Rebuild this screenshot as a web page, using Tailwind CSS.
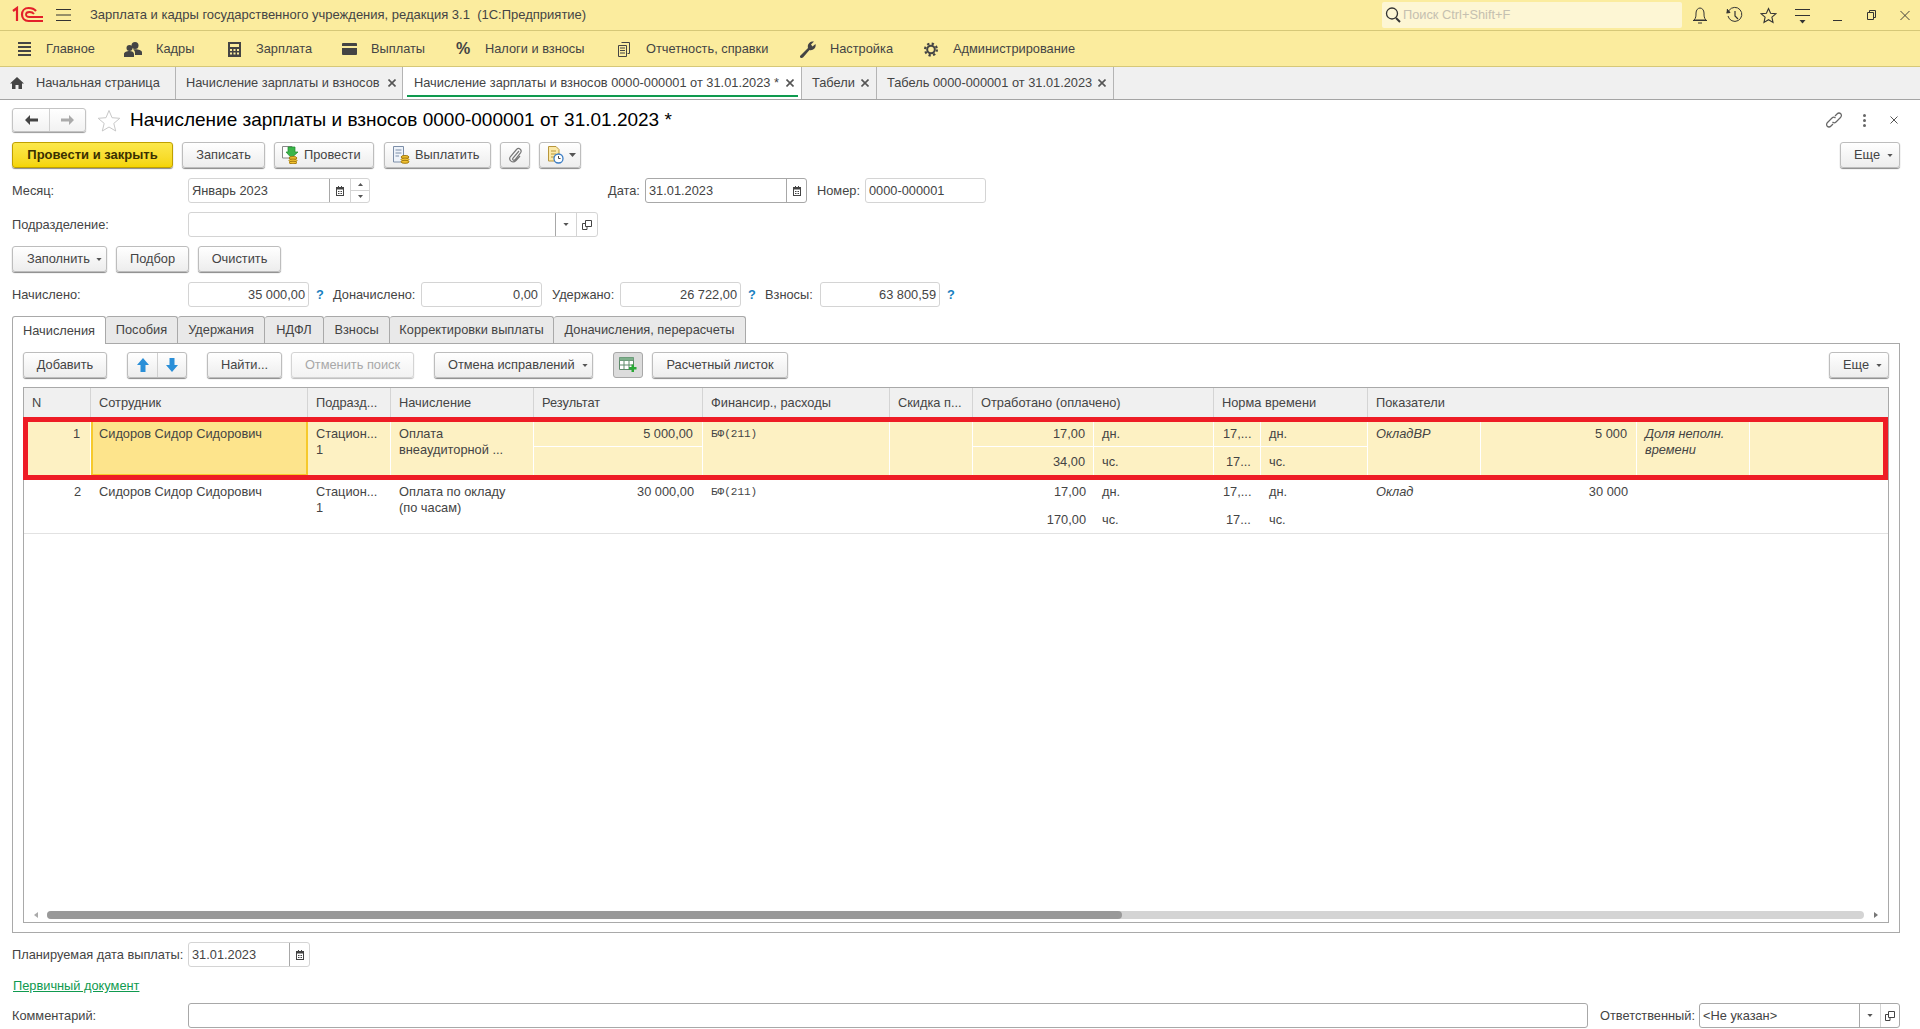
<!DOCTYPE html>
<html lang="ru">
<head>
    <meta charset="UTF-8">
    <title>Начисление зарплаты и взносов</title>
    <script src="https://cdn.jsdelivr.net/npm/@tailwindcss/browser@4"></script>
</head>
<body class="w-[1920px] h-[1029px] overflow-hidden bg-white text-[#444] text-[12.8px] leading-4 font-['Liberation_Sans',sans-serif]">

    <!-- title bar -->
    <div class="h-[31px] bg-[#fbec9e] border-b border-[#d6c878] flex items-center relative">
        <svg class="ml-[12px] w-[31px] h-[18px]" viewBox="0 0 31 18" fill="none" stroke="#e3202a" stroke-width="2.2">
            <path d="M1 5 L5 2 V15"/>
            <path d="M24 5 C22 2.5 19 2 16.5 2 C12.5 2 10 5 10 8.5 C10 12 12.5 15 16.5 15 H31"/>
            <path d="M22 8 C21 6.5 19.5 6 17.5 6 C15 6 14 7.5 14 8.5 C14 10 15 11 17.5 11 H31" stroke-width="1.8"/>
        </svg>
        <svg class="ml-[13px] w-[15px] h-[14px]" viewBox="0 0 15 14" stroke="#333" stroke-width="1"><path d="M0 1.5H15M0 7H15M0 12.5H15"/></svg>
        <div class="ml-[19px] w-[1292px] text-[13px] whitespace-pre">Зарплата и кадры государственного учреждения, редакция 3.1  (1С:Предприятие)</div>
        <div class="w-[300px] h-[26px] bg-[#fdf6d4] rounded-[2px] flex items-center pl-[3px]">
            <svg class="w-[16px] h-[18px]" viewBox="0 0 16 18" fill="none" stroke="#333" stroke-width="1.3"><circle cx="7" cy="7.5" r="5.5"/><path d="M11 12L15 16" stroke-width="2"/></svg>
            <span class="ml-[2px] text-[#c5c0b0]">Поиск Ctrl+Shift+F</span>
        </div>
        <svg class="ml-[10px] w-[16px] h-[18px]" viewBox="0 0 16 18" fill="none" stroke="#333"><path d="M2 14C4 12 4 10 4 7C4 4 6 2 8 2C10 2 12 4 12 7C12 10 12 12 14 14Z"/><path d="M1 14.5H15M6 17H10"/></svg>
        <svg class="ml-[18px] w-[17px] h-[18px]" viewBox="0 0 17 18" fill="none" stroke="#333"><path d="M3 4.5A7 7 0 1 1 2 10"/><path d="M1 3L4 6.5L0.5 7" fill="#333"/><path d="M9 5V10L12 13" stroke-width="1.2"/></svg>
        <svg class="ml-[17px] w-[17px] h-[17px]" viewBox="0 0 17 17" fill="none" stroke="#333" stroke-width="1.1"><path d="M8.5 1.5L10.6 6.3L15.8 6.8L11.9 10.2L13 15.4L8.5 12.7L4 15.4L5.1 10.2L1.2 6.8L6.4 6.3Z"/></svg>
        <svg class="ml-[18px] w-[15px] h-[17px]" viewBox="0 0 15 17" stroke="#333"><path d="M0 2.5H15M0 8.5H15" fill="none"/><path d="M4.5 13H10.5L7.500 16.500Z" fill="#333" stroke="none"/></svg>
        <svg class="ml-[23px] w-[9px] h-[14px]" viewBox="0 0 9 14" stroke="#333"><path d="M0 12.500H9"/></svg>
        <svg class="ml-[25px] w-[9px] h-[10px]" viewBox="0 0 9 10" fill="none" stroke="#333"><path d="M0.500 2.500H6.500V9.500H0.500Z M2.500 2.500V0.500H8.500V7.500H6.500"/></svg>
        <svg class="ml-[24px] w-[10px] h-[11px]" viewBox="0 0 11 11" stroke="#333"><path d="M0.500 0.500L10.500 10.500M10.500 0.500L0.500 10.500"/></svg>
    </div>

    <!-- sections -->
    <div class="h-[36px] pt-[1px] bg-[#fbec9e] border-b border-[#d6c878] flex items-center">
        <svg class="ml-[18px] w-[13px] h-[14px]" viewBox="0 0 13 14" fill="#444"><path d="M0 0H13V2H0ZM0 4H13V6H0ZM0 8H13V10H0ZM0 12H13V14H0Z"/></svg>
        <span class="ml-[15px] w-[78px]">Главное</span>
        <svg class="w-[18px] h-[15px]" viewBox="0 0 18 15" fill="#444"><circle cx="11" cy="3.500" r="3.500"/><circle cx="5.500" cy="6" r="3"/><path d="M0 15V12C0 10 3 9 5.500 9C8 9 10 10 10 12V15ZM11 15V11C11 9 10 8 9 7.500C12 7 18 7.500 18 10.500V13H11Z"/></svg>
        <span class="ml-[14px] w-[72px]">Кадры</span>
        <svg class="w-[13px] h-[15px]" viewBox="0 0 13 15" fill="#444"><path d="M0 0H13V15H0ZM2 2V5H11V2ZM2 7V9H4V7ZM5.500 7V9H7.500V7ZM9 7V9H11V7ZM2 10.500V12.500H4V10.500ZM5.500 10.500V12.500H7.500V10.500ZM9 10.500V12.500H11V10.500Z" fill-rule="evenodd"/></svg>
        <span class="ml-[15px] w-[86px]">Зарплата</span>
        <svg class="w-[15px] h-[12px]" viewBox="0 0 15 12" fill="#444"><path d="M0 1C0 .5 .5 0 1 0H14C14.500 0 15 .5 15 1V3H0ZM0 5H15V11C15 11.500 14.500 12 14 12H1C.5 12 0 11.500 0 11Z"/></svg>
        <span class="ml-[14px] w-[85px]">Выплаты</span>
        <span class="w-[14px] text-[16px] font-bold">%</span>
        <span class="ml-[15px] w-[133px]">Налоги и взносы</span>
        <svg class="w-[12px] h-[15px]" viewBox="0 0 12 15" fill="none" stroke="#444"><path d="M3.500 .5H11.500V11.500H9.500M.5 3.500H8.500V14.500H.5ZM2 6H7M2 8.500H7M2 11H7M.5 3.500"/></svg>
        <span class="ml-[16px] w-[154px]">Отчетность, справки</span>
        <svg class="w-[16px] h-[17px]" viewBox="0 0 16 17" fill="#444"><path d="M0 15L8 7C7 3 10 0 14 0.500L11 3.500L12.500 5.500L15.500 3C16.500 7 13 10 9.500 9L3 16.500C1.500 17.500 -.5 16.500 0 15Z"/></svg>
        <span class="ml-[14px] w-[94px]">Настройка</span>
        <svg class="w-[14px] h-[15px]" viewBox="0 0 14 15" fill="none" stroke="#444"><circle cx="7" cy="7.500" r="5.900" stroke-width="2.200" stroke-dasharray="2.300 2.330"/><circle cx="7" cy="7.500" r="3.800" stroke-width="2"/></svg>
        <span class="ml-[15px]">Администрирование</span>
    </div>

    <!-- open windows -->
    <div class="h-[33px] bg-[#f0f0f0] border-b border-[#a4a4a4] flex items-stretch">
        <div class="w-[176px] border-r border-[#b4b4b4] flex items-center">
            <svg class="ml-[10px] w-[14px] h-[12px]" viewBox="0 0 14 12" fill="#444"><path d="M7 0L14 6.500H12V12H8.500V8H5.500V12H2V6.500H0Z"/></svg>
            <span class="ml-[12px]">Начальная страница</span>
        </div>
        <div class="w-[227px] border-r border-[#b4b4b4] flex items-center justify-between pl-[10px] pr-[6px]">
            <span>Начисление зарплаты и взносов</span>
            <svg class="w-[8px] h-[8px]" viewBox="0 0 8 8" stroke="#555" stroke-width="1.600"><path d="M.5 .5L7.500 7.500M7.500 .5L.5 7.500"/></svg>
        </div>
        <div class="relative w-[399px] bg-white border-r border-[#b4b4b4] flex items-center justify-between pl-[11px] pr-[7px]">
            <span>Начисление зарплаты и взносов 0000-000001 от 31.01.2023 *</span>
            <svg class="w-[8px] h-[8px]" viewBox="0 0 8 8" stroke="#555" stroke-width="1.600"><path d="M.5 .5L7.500 7.500M7.500 .5L.5 7.500"/></svg>
            <div class="absolute left-[4px] right-[3px] bottom-[2px] h-[2px] bg-[#0f9a4f]"></div>
        </div>
        <div class="w-[75px] border-r border-[#b4b4b4] flex items-center justify-between pl-[10px] pr-[7px]">
            <span>Табели</span>
            <svg class="w-[8px] h-[8px]" viewBox="0 0 8 8" stroke="#555" stroke-width="1.600"><path d="M.5 .5L7.500 7.500M7.500 .5L.5 7.500"/></svg>
        </div>
        <div class="w-[237px] border-r border-[#b4b4b4] flex items-center justify-between pl-[10px] pr-[7px]">
            <span>Табель 0000-000001 от 31.01.2023</span>
            <svg class="w-[8px] h-[8px]" viewBox="0 0 8 8" stroke="#555" stroke-width="1.600"><path d="M.5 .5L7.500 7.500M7.500 .5L.5 7.500"/></svg>
        </div>
    </div>

    <!-- document header -->
    <div class="mt-[8px] h-[24px] pl-[12px] pr-[22px] flex items-center">
        <div class="w-[74px] h-[24px] border border-[#c4c4c4] rounded-[3px] shadow-[0_1px_1px_#999] bg-linear-to-b from-white to-[#f2f2f2] flex">
            <div class="w-[37px] border-r border-[#d0d0d0] flex items-center justify-center">
                <svg class="w-[13px] h-[10px]" viewBox="0 0 13 10" fill="#444"><path d="M0 5L5 0V3.500H13V6.500H5V10Z"/></svg>
            </div>
            <div class="flex-1 flex items-center justify-center">
                <svg class="w-[13px] h-[10px]" viewBox="0 0 13 10" fill="#aaa"><path d="M13 5L8 0V3.500H0V6.500H8V10Z"/></svg>
            </div>
        </div>
        <svg class="ml-[11px] w-[24px] h-[23px]" viewBox="0 0 24 23" fill="none" stroke="#c8c8c8"><path d="M12 1.500L15 8.700L22.800 9.300L16.800 14.400L18.700 22L12 18L5.300 22L7.200 14.400L1.200 9.300L9 8.700Z"/></svg>
        <span class="ml-[9px] text-[19px] leading-6 text-black">Начисление зарплаты и взносов 0000-000001 от 31.01.2023 *</span>
        <svg class="ml-auto w-[16px] h-[18px]" viewBox="0 0 16 18" fill="none" stroke="#666" stroke-width="1.200"><path d="M9 5L11 3C12.500 1.500 14 2 15 3C15.500 4 15.500 5.500 14.500 6.500L10 11C9 12 7.500 12 6.500 11M7 13L5 15C3.500 16.500 2 16 1 15C.5 14 .5 12.500 1.500 11.500L6 7C7 6 8.500 6 9.500 7"/></svg>
        <svg class="ml-[21px] w-[3px] h-[13px]" viewBox="0 0 3 13" fill="#666"><circle cx="1.500" cy="1.500" r="1.500"/><circle cx="1.500" cy="6.500" r="1.500"/><circle cx="1.500" cy="11.500" r="1.500"/></svg>
        <svg class="ml-[24px] w-[8px] h-[8px]" viewBox="0 0 8 8" stroke="#555"><path d="M.5 .5L7.500 7.500M7.500 .5L.5 7.500"/></svg>
    </div>

    <div class="mt-[10px] h-[26px] pl-[12px] pr-[20px] flex items-stretch">
        <button class="w-[161px] rounded-[3px] border border-[#c0a000] shadow-[0_1px_1px_#888] bg-linear-to-b from-[#fce84a] to-[#f5d500] text-[13px] font-bold text-[#3a3000]">Провести и закрыть</button>
        <button class="ml-[9px] w-[83px] border border-[#bdbdbd] rounded-[3px] shadow-[0_1px_1px_#888] bg-linear-to-b from-white to-[#ededed]">Записать</button>
        <button class="ml-[9px] w-[100px] border border-[#bdbdbd] rounded-[3px] shadow-[0_1px_1px_#888] bg-linear-to-b from-white to-[#ededed] flex items-center pl-[6px] gap-[5px]">
            <svg class="w-[18px] h-[18px]" viewBox="0 0 18 18"><path d="M1.500 .5H11V12H1.500Z" fill="#fff" stroke="#888"/><path d="M7 1H14V6H17L10.500 12L5 6H7Z" fill="#3bb54a" stroke="#1e8a2d" stroke-width=".7"/><ellipse cx="12" cy="12" rx="4" ry="1.500" fill="#f2c230" stroke="#a57c10"/><ellipse cx="12" cy="14.500" rx="4" ry="1.500" fill="#f2c230" stroke="#a57c10"/><ellipse cx="12" cy="16.500" rx="4" ry="1.300" fill="#f2c230" stroke="#a57c10"/></svg>
            <span>Провести</span>
        </button>
        <button class="ml-[10px] w-[107px] border border-[#bdbdbd] rounded-[3px] shadow-[0_1px_1px_#888] bg-linear-to-b from-white to-[#ededed] flex items-center pl-[7px] gap-[5px]">
            <svg class="w-[18px] h-[18px]" viewBox="0 0 18 18"><path d="M1.500 .5H11.500V16H1.500Z" fill="#eef3fa" stroke="#7c8ea8"/><path d="M3.500 4H9.500M3.500 7H9.500M3.500 10H7" stroke="#7c8ea8"/><ellipse cx="13" cy="11" rx="4" ry="1.500" fill="#f2c230" stroke="#a57c10"/><ellipse cx="13" cy="13.500" rx="4" ry="1.500" fill="#f2c230" stroke="#a57c10"/><ellipse cx="13" cy="15.800" rx="4" ry="1.500" fill="#f2c230" stroke="#a57c10"/></svg>
            <span>Выплатить</span>
        </button>
        <button class="ml-[9px] w-[30px] border border-[#bdbdbd] rounded-[3px] shadow-[0_1px_1px_#888] bg-linear-to-b from-white to-[#ededed] flex items-center justify-center">
            <svg class="w-[14px] h-[16px]" viewBox="0 0 14 16" fill="none" stroke="#777" stroke-width="1.200"><path d="M11 4L5 11C4 12.500 5.500 14 7 12.800L12.500 6C14.500 3 11 0 8.500 2.500L2.500 9.500C0 13 4.500 17 8 13.500L12 9"/></svg>
        </button>
        <button class="ml-[9px] w-[42px] border border-[#bdbdbd] rounded-[3px] shadow-[0_1px_1px_#888] bg-linear-to-b from-white to-[#ededed] flex items-center pl-[6px] gap-[5px]">
            <svg class="w-[18px] h-[18px]" viewBox="0 0 18 18"><path d="M2.500 .5H10L13 3.500V15H2.500Z" fill="#fbe9a8" stroke="#b8963c"/><path d="M5 5H10M5 8H10M5 11H8" stroke="#b8963c"/><circle cx="12.500" cy="12.500" r="4.500" fill="#fff" stroke="#3a7cc4" stroke-width="1.300"/><path d="M12.500 10V12.500H14.500" stroke="#444" fill="none"/></svg>
            <svg class="w-[7px] h-[4px]" viewBox="0 0 7 4" fill="#555"><path d="M0 0H7L3.500 4Z"/></svg>
        </button>
        <button class="ml-auto w-[60px] border border-[#bdbdbd] rounded-[3px] shadow-[0_1px_1px_#888] bg-linear-to-b from-white to-[#ededed] flex items-center pl-[13px] gap-[7px]">
            <span>Еще</span>
            <svg class="w-[6px] h-[3px]" viewBox="0 0 7 4" fill="#555"><path d="M0 0H7L3.500 4Z"/></svg>
        </button>
    </div>

    <!-- requisites -->
    <div class="mt-[10px] h-[25px] pl-[12px] flex items-center">
        <span class="w-[176px]">Месяц:</span>
        <div class="w-[182px] h-[25px] border border-[#d4d4d4] rounded-[3px] flex items-stretch">
            <span class="w-[140px] pl-[3px] self-center">Январь 2023</span>
            <div class="w-[21px] border-l border-[#a8a8a8] flex items-center justify-center">
                <svg class="w-[10px] h-[10px]" viewBox="0 0 10 10" fill="#444"><path d="M1 1H9V10H1ZM2 3.500V9H8V3.500ZM3 0H4V2H3ZM6 0H7V2H6ZM3 5H4V6H3ZM4.500 5H5.500V6H4.500ZM6 5H7V6H6ZM3 7H4V8H3ZM4.500 7H5.500V8H4.500ZM6 7H7V8H6Z"/></svg>
            </div>
            <div class="flex-1 border-l border-[#d4d4d4] flex flex-col">
                <div class="flex-1 border-b border-[#d4d4d4] flex items-center justify-center"><svg class="w-[5px] h-[3px]" viewBox="0 0 5 3" fill="#555"><path d="M0 3H5L2.500 0Z"/></svg></div>
                <div class="flex-1 flex items-center justify-center"><svg class="w-[5px] h-[3px]" viewBox="0 0 5 3" fill="#555"><path d="M0 0H5L2.500 3Z"/></svg></div>
            </div>
        </div>
        <span class="ml-[238px] w-[37px]">Дата:</span>
        <div class="w-[162px] h-[25px] border border-[#a8a8a8] rounded-[3px] flex items-stretch">
            <span class="w-[140px] pl-[3px] self-center">31.01.2023</span>
            <div class="flex-1 border-l border-[#a8a8a8] flex items-center justify-center">
                <svg class="w-[10px] h-[10px]" viewBox="0 0 10 10" fill="#444"><path d="M1 1H9V10H1ZM2 3.500V9H8V3.500ZM3 0H4V2H3ZM6 0H7V2H6ZM3 5H4V6H3ZM4.500 5H5.500V6H4.500ZM6 5H7V6H6ZM3 7H4V8H3ZM4.500 7H5.500V8H4.500ZM6 7H7V8H6Z"/></svg>
            </div>
        </div>
        <span class="ml-[10px] w-[48px]">Номер:</span>
        <div class="w-[121px] h-[25px] border border-[#d4d4d4] rounded-[3px] pl-[3px] flex items-center">0000-000001</div>
    </div>

    <div class="mt-[9px] h-[25px] pl-[12px] flex items-center">
        <span class="w-[176px]">Подразделение:</span>
        <div class="w-[410px] h-[25px] border border-[#d4d4d4] rounded-[3px] flex items-stretch justify-end">
            <div class="w-[21px] border-l border-[#a8a8a8] flex items-center justify-center"><svg class="w-[6px] h-[3px]" viewBox="0 0 7 4" fill="#555"><path d="M0 0H7L3.500 4Z"/></svg></div>
            <div class="w-[21px] border-l border-[#d4d4d4] flex items-center justify-center">
                <svg class="w-[10px] h-[10px]" viewBox="0 0 10 10" fill="none" stroke="#444"><path d="M3.500 .5H9.500V6.500H3.500ZM3.500 3.500H.5V9.500H5V6.500"/></svg>
            </div>
        </div>
    </div>

    <div class="mt-[9px] h-[26px] pl-[12px] flex items-stretch gap-[9px]">
        <button class="w-[95px] border border-[#bdbdbd] rounded-[3px] shadow-[0_1px_1px_#888] bg-linear-to-b from-white to-[#ededed] flex items-center pl-[14px] gap-[6px]">
            <span>Заполнить</span>
            <svg class="w-[6px] h-[3px]" viewBox="0 0 7 4" fill="#555"><path d="M0 0H7L3.500 4Z"/></svg>
        </button>
        <button class="w-[73px] border border-[#bdbdbd] rounded-[3px] shadow-[0_1px_1px_#888] bg-linear-to-b from-white to-[#ededed]">Подбор</button>
        <button class="w-[83px] border border-[#bdbdbd] rounded-[3px] shadow-[0_1px_1px_#888] bg-linear-to-b from-white to-[#ededed]">Очистить</button>
    </div>

    <div class="mt-[10px] h-[25px] pl-[12px] flex items-center">
        <span class="w-[176px]">Начислено:</span>
        <div class="w-[121px] h-[25px] border border-[#d4d4d4] rounded-[3px] pr-[3px] flex items-center justify-end">35 000,00</div>
        <span class="ml-[7px] w-[17px] text-[#1a7fc0] font-bold">?</span>
        <span class="w-[88px]">Доначислено:</span>
        <div class="w-[121px] h-[25px] border border-[#d4d4d4] rounded-[3px] pr-[3px] flex items-center justify-end">0,00</div>
        <span class="ml-[10px] w-[68px]">Удержано:</span>
        <div class="w-[121px] h-[25px] border border-[#d4d4d4] rounded-[3px] pr-[3px] flex items-center justify-end">26 722,00</div>
        <span class="ml-[7px] w-[17px] text-[#1a7fc0] font-bold">?</span>
        <span class="w-[55px]">Взносы:</span>
        <div class="w-[120px] h-[25px] border border-[#d4d4d4] rounded-[3px] pr-[3px] flex items-center justify-end">63 800,59</div>
        <span class="ml-[7px] text-[#1a7fc0] font-bold">?</span>
    </div>

    <!-- page tabs -->
    <div class="mt-[9px] h-[28px] pl-[12px] flex items-stretch relative z-10">
        <div class="w-[94px] h-[28px] bg-white border border-b-0 border-[#a9a9a9] rounded-t-[3px] flex items-center justify-center">Начисления</div>
        <div class="w-[72px] h-[27px] bg-[#e9e9e9] border-t border-r border-[#a9a9a9] rounded-t-[3px] flex items-center justify-center">Пособия</div>
        <div class="w-[87px] h-[27px] bg-[#e9e9e9] border-t border-r border-[#a9a9a9] rounded-t-[3px] flex items-center justify-center">Удержания</div>
        <div class="w-[59px] h-[27px] bg-[#e9e9e9] border-t border-r border-[#a9a9a9] rounded-t-[3px] flex items-center justify-center">НДФЛ</div>
        <div class="w-[66px] h-[27px] bg-[#e9e9e9] border-t border-r border-[#a9a9a9] rounded-t-[3px] flex items-center justify-center">Взносы</div>
        <div class="w-[164px] h-[27px] bg-[#e9e9e9] border-t border-r border-[#a9a9a9] rounded-t-[3px] flex items-center justify-center">Корректировки выплаты</div>
        <div class="w-[192px] h-[27px] bg-[#e9e9e9] border-t border-r border-[#a9a9a9] rounded-t-[3px] flex items-center justify-center">Доначисления, перерасчеты</div>
    </div>

    <div class="-mt-px ml-[12px] w-[1888px] h-[590px] border border-[#a9a9a9] px-[10px] pt-[8px] flex flex-col">
        <div class="h-[26px] flex items-stretch shrink-0">
            <button class="w-[84px] border border-[#bdbdbd] rounded-[3px] shadow-[0_1px_1px_#888] bg-linear-to-b from-white to-[#ededed]">Добавить</button>
            <div class="ml-[20px] w-[60px] border border-[#bdbdbd] rounded-[3px] shadow-[0_1px_1px_#888] bg-linear-to-b from-white to-[#ededed] flex">
                <div class="w-[30px] border-r border-[#d0d0d0] flex items-center justify-center">
                    <svg class="w-[12px] h-[14px]" viewBox="0 0 12 14" fill="#2a8fd8"><path d="M6 0L12 7H8.500V14H3.500V7H0Z"/></svg>
                </div>
                <div class="flex-1 flex items-center justify-center">
                    <svg class="w-[12px] h-[14px]" viewBox="0 0 12 14" fill="#2a8fd8"><path d="M6 14L12 7H8.500V0H3.500V7H0Z"/></svg>
                </div>
            </div>
            <button class="ml-[20px] w-[75px] border border-[#bdbdbd] rounded-[3px] shadow-[0_1px_1px_#888] bg-linear-to-b from-white to-[#ededed]">Найти...</button>
            <button class="ml-[9px] w-[123px] border border-[#d4d4d4] rounded-[3px] shadow-[0_1px_1px_#bbb] bg-linear-to-b from-white to-[#f2f2f2] text-[#a8a8a8]">Отменить поиск</button>
            <button class="ml-[20px] w-[159px] border border-[#bdbdbd] rounded-[3px] shadow-[0_1px_1px_#888] bg-linear-to-b from-white to-[#ededed] flex items-center pl-[13px] gap-[7px]">
                <span>Отмена исправлений</span>
                <svg class="w-[6px] h-[3px]" viewBox="0 0 7 4" fill="#555"><path d="M0 0H7L3.500 4Z"/></svg>
            </button>
            <button class="ml-[20px] w-[30px] border border-[#a8a8a8] rounded-[3px] bg-[#dcdcdc] flex items-center justify-center">
                <svg class="w-[18px] h-[16px]" viewBox="0 0 18 16"><path d="M.5 .5H14.500V12.500H.5Z" fill="#fff" stroke="#5e8a6a"/><path d="M.5 3.500H14.500M5 .5V12.500M10 .5V12.500M.5 8H14.500" stroke="#5e8a6a"/><path d="M.5 .5H14.500V3.500H.5Z" fill="#7fb08c"/><path d="M10 10H12.500V7.500H15V10H17.500V12.500H15V15H12.500V12.500H10Z" fill="#2aa836"/></svg>
            </button>
            <button class="ml-[9px] w-[136px] border border-[#bdbdbd] rounded-[3px] shadow-[0_1px_1px_#888] bg-linear-to-b from-white to-[#ededed]">Расчетный листок</button>
            <button class="ml-auto w-[60px] border border-[#bdbdbd] rounded-[3px] shadow-[0_1px_1px_#888] bg-linear-to-b from-white to-[#ededed] flex items-center pl-[13px] gap-[7px]">
                <span>Еще</span>
                <svg class="w-[6px] h-[3px]" viewBox="0 0 7 4" fill="#555"><path d="M0 0H7L3.500 4Z"/></svg>
            </button>
        </div>

        <!-- table -->
        <div class="relative mt-[9px] h-[536px] border border-[#a9a9a9] flex flex-col shrink-0">
            <div class="h-[30px] pb-[1px] grid grid-cols-[67px_217px_83px_143px_169px_187px_83px_241px_154px_1fr] bg-[#f0f0f0] shrink-0">
                <div class="border-r border-[#d4d4d4] pl-[8px] flex items-center">N</div>
                <div class="border-r border-[#d4d4d4] pl-[8px] flex items-center">Сотрудник</div>
                <div class="border-r border-[#d4d4d4] pl-[8px] flex items-center">Подразд...</div>
                <div class="border-r border-[#d4d4d4] pl-[8px] flex items-center">Начисление</div>
                <div class="border-r border-[#d4d4d4] pl-[8px] flex items-center">Результат</div>
                <div class="border-r border-[#d4d4d4] pl-[8px] flex items-center">Финансир., расходы</div>
                <div class="border-r border-[#d4d4d4] pl-[8px] flex items-center">Скидка п...</div>
                <div class="border-r border-[#d4d4d4] pl-[8px] flex items-center">Отработано (оплачено)</div>
                <div class="border-r border-[#d4d4d4] pl-[8px] flex items-center">Норма времени</div>
                <div class="pl-[8px] flex items-center">Показатели</div>
            </div>

            <div class="h-[58px] grid grid-cols-[67px_217px_83px_143px_169px_187px_83px_121px_120px_47px_107px_113px_156px_113px_1fr] grid-rows-[29px_29px] bg-[#fdf1c3] shrink-0">
                <div class="row-span-2 border-r border-white pt-[8px] pr-[10px] text-right">1</div>
                <div class="row-span-2 border-2 border-[#f6c92c] bg-[#fde48c] pt-[6px] pl-[6px]">Сидоров Сидор Сидорович</div>
                <div class="row-span-2 border-r border-white pt-[8px] pl-[8px]">Стацион...<br>1</div>
                <div class="row-span-2 border-r border-white pt-[8px] pl-[8px]">Оплата<br>внеаудиторной ...</div>
                <div class="border-r border-b border-white pt-[8px] pr-[9px] text-right">5 000,00</div>
                <div class="row-span-2 border-r border-white pt-[8px] pl-[8px] font-['Liberation_Mono',monospace] text-[11px]">БФ(211)</div>
                <div class="row-span-2 border-r border-white"></div>
                <div class="border-r border-b border-white pt-[8px] pr-[8px] text-right">17,00</div>
                <div class="border-r border-b border-white pt-[8px] pl-[8px]">дн.</div>
                <div class="border-r border-b border-white pt-[8px] pl-[9px]">17,...</div>
                <div class="border-r border-b border-white pt-[8px] pl-[8px]">дн.</div>
                <div class="row-span-2 border-r border-white pt-[8px] pl-[8px] italic">ОкладВР</div>
                <div class="row-span-2 border-r border-white pt-[8px] pr-[9px] text-right">5 000</div>
                <div class="row-span-2 border-r border-white pt-[8px] pl-[8px] italic">Доля неполн.<br>времени</div>
                <div></div>
                <div class="border-r border-white"></div>
                <div class="border-r border-white pt-[7px] pr-[8px] text-right">34,00</div>
                <div class="border-r border-white pt-[7px] pl-[8px]">чс.</div>
                <div class="border-r border-white pt-[7px] pl-[12px]">17...</div>
                <div class="border-r border-white pt-[7px] pl-[8px]">чс.</div>
            </div>

            <div class="h-[58px] grid grid-cols-[67px_217px_83px_143px_169px_187px_83px_121px_120px_47px_107px_113px_156px_113px_1fr] grid-rows-[29px_29px] border-b border-[#e2e2e2] shrink-0">
                <div class="row-span-2 pt-[8px] pr-[10px] text-right">2</div>
                <div class="row-span-2 pt-[8px] pl-[8px]">Сидоров Сидор Сидорович</div>
                <div class="row-span-2 pt-[8px] pl-[8px]">Стацион...<br>1</div>
                <div class="row-span-2 pt-[8px] pl-[8px]">Оплата по окладу<br>(по часам)</div>
                <div class="pt-[8px] pr-[9px] text-right">30 000,00</div>
                <div class="row-span-2 pt-[8px] pl-[8px] font-['Liberation_Mono',monospace] text-[11px]">БФ(211)</div>
                <div class="row-span-2"></div>
                <div class="pt-[8px] pr-[8px] text-right">17,00</div>
                <div class="pt-[8px] pl-[8px]">дн.</div>
                <div class="pt-[8px] pl-[9px]">17,...</div>
                <div class="pt-[8px] pl-[8px]">дн.</div>
                <div class="row-span-2 pt-[8px] pl-[8px] italic">Оклад</div>
                <div class="row-span-2 pt-[8px] pr-[9px] text-right">30 000</div>
                <div class="row-span-2"></div>
                <div></div>
                <div></div>
                <div class="pt-[7px] pr-[8px] text-right">170,00</div>
                <div class="pt-[7px] pl-[8px]">чс.</div>
                <div class="pt-[7px] pl-[12px]">17...</div>
                <div class="pt-[7px] pl-[8px]">чс.</div>
            </div>

            <!-- horizontal scroll -->
            <div class="mt-auto mb-[3px] h-[8px] flex items-center pl-[10px] pr-[10px]">
                <svg class="w-[4px] h-[6px]" viewBox="0 0 4 6" fill="#aaa"><path d="M4 0V6L0 3Z"/></svg>
                <div class="ml-[9px] mr-[10px] flex-1 h-[8px] rounded-full bg-[#d4d4d4] flex">
                    <div class="w-[1075px] h-[8px] rounded-full bg-[#999]"></div>
                </div>
                <svg class="w-[4px] h-[6px]" viewBox="0 0 4 6" fill="#777"><path d="M0 0V6L4 3Z"/></svg>
            </div>

            <!-- red mark over the first row -->
            <div class="absolute left-[-1px] right-0 top-[29px] h-[63px] border-[5px] border-[#ee1c25]"></div>
        </div>
    </div>

    <!-- footer -->
    <div class="mt-[9px] h-[25px] pl-[12px] flex items-center">
        <span class="w-[176px]">Планируемая дата выплаты:</span>
        <div class="w-[122px] h-[25px] border border-[#d4d4d4] rounded-[3px] flex items-stretch">
            <span class="w-[100px] pl-[3px] self-center">31.01.2023</span>
            <div class="flex-1 border-l border-[#a8a8a8] flex items-center justify-center">
                <svg class="w-[10px] h-[10px]" viewBox="0 0 10 10" fill="#444"><path d="M1 1H9V10H1ZM2 3.500V9H8V3.500ZM3 0H4V2H3ZM6 0H7V2H6ZM3 5H4V6H3ZM4.500 5H5.500V6H4.500ZM6 5H7V6H6ZM3 7H4V8H3ZM4.500 7H5.500V8H4.500ZM6 7H7V8H6Z"/></svg>
            </div>
        </div>
    </div>
    <div class="mt-[11px] h-[16px] pl-[13px]">
        <span class="text-[#0f9a4f] underline">Первичный документ</span>
    </div>
    <div class="mt-[9px] h-[25px] pl-[12px] flex items-center">
        <span class="w-[176px]">Комментарий:</span>
        <div class="w-[1400px] h-[25px] border border-[#a8a8a8] rounded-[3px]"></div>
        <span class="ml-[12px] w-[99px]">Ответственный:</span>
        <div class="w-[201px] h-[25px] border border-[#a8a8a8] rounded-[3px] flex items-stretch">
            <span class="w-[159px] pl-[3px] self-center">&lt;Не указан&gt;</span>
            <div class="w-[21px] border-l border-[#a8a8a8] flex items-center justify-center"><svg class="w-[6px] h-[3px]" viewBox="0 0 7 4" fill="#555"><path d="M0 0H7L3.500 4Z"/></svg></div>
            <div class="flex-1 border-l border-[#d4d4d4] flex items-center justify-center">
                <svg class="w-[10px] h-[10px]" viewBox="0 0 10 10" fill="none" stroke="#444"><path d="M3.500 .5H9.500V6.500H3.500ZM3.500 3.500H.5V9.500H5V6.500"/></svg>
            </div>
        </div>
    </div>
</body>
</html>
